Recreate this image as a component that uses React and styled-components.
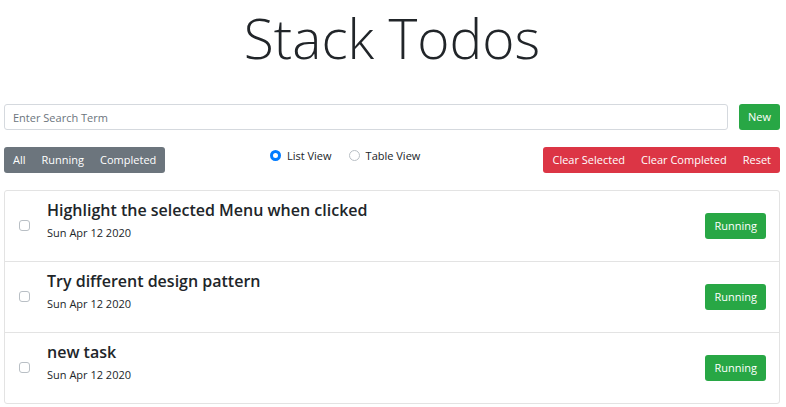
import React, { useState } from "react";
import styled, { createGlobalStyle } from "styled-components";

const GlobalStyle = createGlobalStyle`
  *, *::before, *::after { box-sizing: border-box; }
  body {
    margin: 0;
    background: #fff;
    color: #212529;
    font-family: "Open Sans", "Noto Sans", sans-serif;
    font-size: 11px;
    line-height: 16px;
  }
  button, input { font: inherit; }
`;

const Page = styled.main`
  padding: 0 6px 3px 4px;
`;

const Title = styled.h1`
  margin: 0 0 28px;
  font-size: 55px;
  font-weight: 300;
  line-height: 76px;
  text-align: center;
`;

const SearchForm = styled.form`
  display: flex;
  gap: 11px;
  margin-bottom: 17px;
`;

const SearchInput = styled.input`
  flex: 1;
  min-width: 0;
  height: 26px;
  padding: 0 8px;
  border: 1px solid #d5d9de;
  border-radius: 3px;
  color: #495057;
  &::placeholder { color: #6c757d; opacity: 1; }
`;

const colors = { green: "#28a745", gray: "#6c757d", red: "#dc3545" };

const Button = styled.button`
  height: 26px;
  padding: 0 9px;
  border: 0;
  border-radius: 3px;
  background: ${({ $tone }) => colors[$tone]};
  color: #fff;
  white-space: nowrap;
  cursor: pointer;
`;

const Toolbar = styled.div`
  display: grid;
  grid-template-columns: repeat(3, minmax(0, 1fr));
  column-gap: 22px;
  margin-bottom: 17px;
`;

const ButtonGroup = styled.div`
  display: flex;
  justify-self: ${({ $end }) => ($end ? "end" : "start")};
  ${Button}:not(:first-child) { padding-left: 8px; border-top-left-radius: 0; border-bottom-left-radius: 0; }
  ${Button}:not(:last-child) { padding-right: 8px; border-top-right-radius: 0; border-bottom-right-radius: 0; }
`;

const ViewOptions = styled.div`
  display: flex;
  align-items: flex-start;
  gap: 17px;
`;

const RadioLabel = styled.label`
  display: flex;
  align-items: center;
  gap: 6px;
  height: 17px;
`;

const Radio = styled.input`
  appearance: none;
  width: 11px;
  height: 11px;
  margin: 0;
  border: 1px solid #b9bfc5;
  border-radius: 50%;
  background: #fff;
  &:checked { border: 3px solid #007bff; }
`;

const TodoList = styled.ul`
  margin: 0;
  padding: 0;
  list-style: none;
  border: 1px solid #e3e3e3;
  border-radius: 3px;
`;

const TodoRow = styled.li`
  display: flex;
  align-items: center;
  padding: 8px 13px 20px 14px;
  & + & { border-top: 1px solid #e3e3e3; }
`;

const Checkbox = styled.input`
  appearance: none;
  flex: none;
  align-self: flex-end;
  width: 11px;
  height: 11px;
  margin: 0 17px 10px 0;
  border: 1px solid #b9bfc5;
  border-radius: 3px;
  background: #fff;
  &:checked { border-color: #007bff; background: #007bff; }
`;

const TodoText = styled.label`
  flex: 1;
  display: flex;
  flex-direction: column;
  gap: 3px;
`;

const TodoTitle = styled.span`
  font-size: 16px;
  font-weight: 600;
  line-height: 23px;
`;

const StatusSlot = styled.div`
  display: flex;
  align-self: flex-end;
  margin-bottom: 2px;
`;

const todos = [
  "Highlight the selected Menu when clicked",
  "Try different design pattern",
  "new task",
];

export default function App() {
  const [view, setView] = useState("List View");
  return (
    <Page>
      <GlobalStyle />
      <Title>Stack Todos</Title>
      <SearchForm onSubmit={(e) => e.preventDefault()}>
        <SearchInput type="search" aria-label="Search term" placeholder="Enter Search Term" />
        <Button type="button" $tone="green">New</Button>
      </SearchForm>
      <Toolbar>
        <ButtonGroup>
          {["All", "Running", "Completed"].map((name) => (
            <Button key={name} type="button" $tone="gray">{name}</Button>
          ))}
        </ButtonGroup>
        <ViewOptions>
          {["List View", "Table View"].map((name) => (
            <RadioLabel key={name}>
              <Radio type="radio" name="view" checked={view === name} onChange={() => setView(name)} />
              {name}
            </RadioLabel>
          ))}
        </ViewOptions>
        <ButtonGroup $end>
          {["Clear Selected", "Clear Completed", "Reset"].map((name) => (
            <Button key={name} type="button" $tone="red">{name}</Button>
          ))}
        </ButtonGroup>
      </Toolbar>
      <TodoList>
        {todos.map((title, i) => (
          <TodoRow key={title}>
            <Checkbox type="checkbox" id={`todo-${i}`} />
            <TodoText htmlFor={`todo-${i}`}>
              <TodoTitle>{title}</TodoTitle>
              <span>Sun Apr 12 2020</span>
            </TodoText>
            <StatusSlot>
              <Button type="button" $tone="green">Running</Button>
            </StatusSlot>
          </TodoRow>
        ))}
      </TodoList>
    </Page>
  );
}
